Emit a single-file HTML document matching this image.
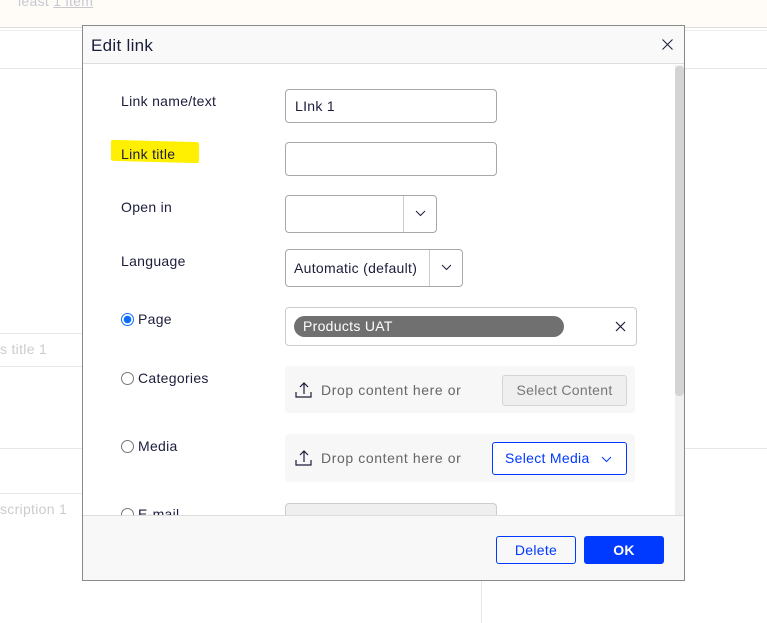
<!DOCTYPE html>
<html><head><style>
*{box-sizing:border-box;margin:0;padding:0}
body{width:767px;height:623px;position:relative;overflow:hidden;background:#fff;font-family:"Liberation Sans",sans-serif;font-size:14px;color:#1b1d3a;letter-spacing:0.3px}
.a{position:absolute}
.hl{background:#e6e6e6;height:1px}
.lbl{position:absolute;left:121px;font-size:14px;color:#1b1d3a}
.inp{position:absolute;border:1px solid #a8a8a8;border-radius:4px;background:#fff}
.drop{position:absolute;left:285px;width:350px;background:#f7f7f7;border-radius:4px}
.radio{position:absolute;left:121px;width:13px;height:13px;border:1px solid #777;border-radius:50%;background:#fff}
</style></head><body>
<div class="a" style="left:0;top:0;width:767px;height:27px;background:#fffcf7"></div>
<div class="a" style="left:18px;top:-7px;color:#c8c8d0;font-size:14px">least <span style="text-decoration:underline">1 item</span></div>
<div class="a hl" style="left:0;top:27px;width:767px;background:#ddd"></div>
<div class="a hl" style="left:0;top:30px;width:767px;background:#eee"></div>
<div class="a hl" style="left:0;top:68px;width:767px"></div>
<div class="a hl" style="left:0;top:333px;width:82px"></div>
<div class="a hl" style="left:0;top:366px;width:82px"></div>
<div class="a hl" style="left:0;top:448px;width:767px"></div>
<div class="a hl" style="left:0;top:493px;width:82px"></div>
<div class="a" style="left:0;top:341px;color:#ccc">s title 1</div>
<div class="a" style="left:0;top:501px;color:#ccc">scription 1</div>
<div class="a" style="left:481px;top:581px;width:1px;height:42px;background:#e6e6e6"></div>

<div class="a" style="left:82px;top:25px;width:603px;height:556px;border:1px solid #8a8a8a;background:#fff;overflow:hidden">
  <div class="a" style="left:0;top:0;width:601px;height:38px;background:#f9f9f9;border-bottom:1px solid #ddd"></div>
  <div class="a" style="left:8px;top:10px;font-size:17px;color:#1b1d3a">Edit link</div>
  <svg class="a" style="left:579px;top:13px" width="11" height="11"><path d="M0.5 0.5L10.5 10.5M10.5 0.5L0.5 10.5" stroke="#1b1d3a" stroke-width="1"/></svg>
  <div class="a" style="left:592px;top:39px;width:9px;height:450px;background:#f0f0f0"></div>
  <div class="a" style="left:592px;top:40px;width:9px;height:330px;background:#d4d4d4;border-radius:4px"></div>
  <div class="a" style="left:0;top:489px;width:601px;height:66px;background:#f8f8f8;border-top:1px solid #ddd"></div>
  <div class="a" style="left:413px;top:510px;width:80px;height:28px;border:1px solid #0039ff;border-radius:3px;color:#0039ff;text-align:center;line-height:26px">Delete</div>
  <div class="a" style="left:501px;top:510px;width:80px;height:28px;background:#0039ff;border-radius:3px;color:#fff;text-align:center;line-height:28px;font-weight:bold">OK</div>
</div>

<div class="a" style="left:111px;top:141px;width:88px;height:21px;background:#ffef00;transform:skewY(1.5deg);border-radius:2px"></div>
<div class="lbl" style="top:93px">Link name/text</div>
<div class="lbl" style="top:146px">Link title</div>
<div class="lbl" style="top:199px">Open in</div>
<div class="lbl" style="top:253px">Language</div>
<div class="lbl" style="top:311px;left:138px">Page</div>
<div class="lbl" style="top:370px;left:138px">Categories</div>
<div class="lbl" style="top:438px;left:138px">Media</div>
<div class="lbl" style="top:506px;left:138px;height:9px;overflow:hidden">E-mail</div>
<div class="radio" style="top:313px;border-color:#0a6cff;background:radial-gradient(circle,#0a6cff 0 3.5px,#fff 4px)"></div>
<div class="radio" style="top:372px"></div>
<div class="radio" style="top:440px"></div>
<div class="a" style="left:121px;top:508px;width:13px;height:7px;overflow:hidden"><div style="width:13px;height:13px;border:1px solid #777;border-radius:50%"></div></div>

<div class="inp" style="left:285px;top:89px;width:212px;height:34px;padding:8px 9px">LInk 1</div>
<div class="inp" style="left:285px;top:142px;width:212px;height:34px"></div>
<div class="inp" style="left:285px;top:195px;width:152px;height:38px"><div class="a" style="left:117px;top:0;width:1px;height:36px;background:#ccc"></div>
<svg class="a" style="left:129px;top:14px" width="11" height="7"><path d="M1 1L5.5 5.5L10 1" stroke="#1b1d3a" fill="none"/></svg></div>
<div class="inp" style="left:285px;top:249px;width:178px;height:38px;padding:10px 8px">Automatic (default)<div class="a" style="left:143px;top:0;width:1px;height:36px;background:#ccc"></div>
<svg class="a" style="left:155px;top:14px" width="11" height="7"><path d="M1 1L5.5 5.5L10 1" stroke="#1b1d3a" fill="none"/></svg></div>
<div class="inp" style="left:285px;top:307px;width:352px;height:39px;border-color:#ccc">
  <div class="a" style="left:8px;top:8px;width:270px;height:21px;background:#707070;border-radius:11px;color:#fff;padding:2px 9px">Products UAT</div>
  <svg class="a" style="left:329px;top:13px" width="11" height="11"><path d="M1 1L10 10M10 1L1 10" stroke="#1b1d3a" stroke-width="1.2"/></svg>
</div>
<div class="drop" style="top:366px;height:47px"></div>
<div class="drop" style="top:434px;height:48px"></div>
<svg class="a" style="left:295px;top:381px" width="18" height="18"><path d="M9 13V2M5 6L9 2L13 6M1 11V16H16V11" stroke="#1b1d3a" fill="none" stroke-width="1.2"/></svg>
<svg class="a" style="left:295px;top:449px" width="18" height="18"><path d="M9 13V2M5 6L9 2L13 6M1 11V16H16V11" stroke="#1b1d3a" fill="none" stroke-width="1.2"/></svg>
<div class="a" style="left:321px;top:382px;color:#666;letter-spacing:0.6px">Drop content here or</div>
<div class="a" style="left:321px;top:450px;color:#666;letter-spacing:0.6px">Drop content here or</div>
<div class="a" style="left:502px;top:375px;width:125px;height:31px;background:#efefef;border:1px solid #d4d4d4;border-radius:3px;color:#777;text-align:center;line-height:29px">Select Content</div>
<div class="a" style="left:492px;top:442px;width:135px;height:33px;border:1px solid #0039ff;border-radius:3px;color:#0039ff;line-height:31px;padding-left:12px;background:#fff">Select Media
<svg class="a" style="left:108px;top:13px" width="11" height="7"><path d="M1 1L5.5 5.5L10 1" stroke="#0039ff" fill="none"/></svg></div>
<div class="a" style="left:285px;top:503px;width:212px;height:12px;background:#efefef;border:1px solid #ccc;border-bottom:none;border-radius:4px 4px 0 0"></div>
</body></html>
